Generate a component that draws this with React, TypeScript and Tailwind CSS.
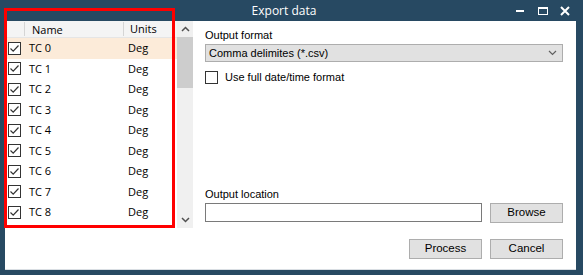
import { useState } from "react";

const rows = ["TC 0", "TC 1", "TC 2", "TC 3", "TC 4", "TC 5", "TC 6", "TC 7", "TC 8"];

function Check({ checked }: { checked: boolean }) {
    return (
        <div className="w-[13px] h-[13px] border border-[#333] bg-white flex items-center justify-center">
            {checked && (
                <svg width="11" height="11" viewBox="0 0 11 11">
                    <path d="M1.5 5.5 L4.2 8.2 L9.5 2.5" fill="none" stroke="#333" strokeWidth="1.2" />
                </svg>
            )}
        </div>
    );
}

function Btn({ label }: { label: string }) {
    return (
        <div className="w-[73px] h-[20px] bg-[#e1e1e1] border border-[#adadad] flex items-center justify-center text-[11.5px] text-black">
            {label}
        </div>
    );
}

export default function App() {
    const [selected] = useState(0);

    return (
        <div className="relative w-[583px] h-[275px] bg-[#274962] flex flex-col font-['Liberation_Sans',sans-serif]">
            {/* title bar */}
            <div className="h-[21px] flex items-center text-white">
                <div className="flex-1 text-center text-[12px] pl-[52px] font-['Open_Sans',sans-serif]">Export data</div>
                <div className="flex items-center gap-[10px] pr-[13px]">
                    <div className="w-[8px] h-[2px] bg-white" />
                    <div className="w-[10px] h-[8px] border border-white border-t-2 ml-[4px]" />
                    <svg width="10" height="10" viewBox="0 0 10 10" className="ml-[2px]">
                        <path d="M1 1 L9 9 M9 1 L1 9" stroke="white" strokeWidth="2" />
                    </svg>
                </div>
            </div>

            {/* client area */}
            <div className="flex-1 ml-[5px] mr-[7px] mb-[5px] bg-white flex border-b border-[#d9dee3]">
                {/* list */}
                <div className="flex h-[207px]">
                    <div className="w-[172px] flex flex-col font-['Open_Sans',sans-serif] text-[11px] text-black">
                        <div className="h-[17px] flex bg-[#f4f4f4] border-b border-[#e5e5e5]">
                            <div className="w-[20px] border-r border-[#d5d5d5] my-[1px]" />
                            <div className="w-[99px] pl-[7px] border-r border-[#d5d5d5] my-[1px] leading-[15px]">Name</div>
                            <div className="flex-1 pl-[6px] leading-[15px]">Units</div>
                        </div>
                        {rows.map((r, i) => (
                            <div key={r} className={`h-[20.5px] flex items-center ${i === selected ? "bg-[#fcebd9]" : ""}`}>
                                <div className="w-[20px] pl-[3px]">
                                    <Check checked />
                                </div>
                                <div className="w-[99px] pl-[4px]">{r}</div>
                                <div className="flex-1 pl-[4px]">Deg</div>
                            </div>
                        ))}
                    </div>
                    <div className="w-[16px] bg-[#f0f0f0] flex flex-col items-center">
                        <div className="h-[16px] flex items-center justify-center">
                            <svg width="9" height="6" viewBox="0 0 9 6">
                                <path d="M1 5 L4.5 1.5 L8 5" fill="none" stroke="#505050" strokeWidth="1.5" />
                            </svg>
                        </div>
                        <div className="w-[16px] h-[51px] bg-[#cdcdcd]" />
                        <div className="flex-1" />
                        <div className="h-[16px] flex items-center justify-center">
                            <svg width="9" height="6" viewBox="0 0 9 6">
                                <path d="M1 1 L4.5 4.5 L8 1" fill="none" stroke="#505050" strokeWidth="1.5" />
                            </svg>
                        </div>
                    </div>
                </div>

                {/* options */}
                <div className="flex-1 pl-[12px] pr-[13px] flex flex-col text-[11px] text-black">
                    <div className="mt-[8px] leading-[13px]">Output format</div>
                    <div className="mt-[2px] h-[18px] bg-[#e1e1e1] border border-[#adadad] flex items-center pl-[3px] pr-[5px]">
                        <span className="flex-1">Comma delimites (*.csv)</span>
                        <svg width="9" height="6" viewBox="0 0 9 6">
                            <path d="M1 1 L4.5 4.5 L8 1" fill="none" stroke="#606060" strokeWidth="1.2" />
                        </svg>
                    </div>
                    <div className="mt-[7px] flex items-center gap-[7px]">
                        <Check checked={false} />
                        <span>Use full date/time format</span>
                    </div>
                    <div className="flex-1" />
                    <div className="leading-[13px]">Output location</div>
                    <div className="mt-[2px] flex gap-[8px]">
                        <div className="flex-1 h-[19px] border border-[#7a7a7a] bg-white" />
                        <Btn label="Browse" />
                    </div>
                    <div className="mt-[16px] mb-[10px] flex justify-end gap-[8px]">
                        <Btn label="Process" />
                        <Btn label="Cancel" />
                    </div>
                </div>
            </div>

            {/* annotation */}
            <div className="absolute left-[4px] top-[8px] w-[171px] h-[220px] border-[3px] border-[#ff0000]" />
        </div>
    );
}
